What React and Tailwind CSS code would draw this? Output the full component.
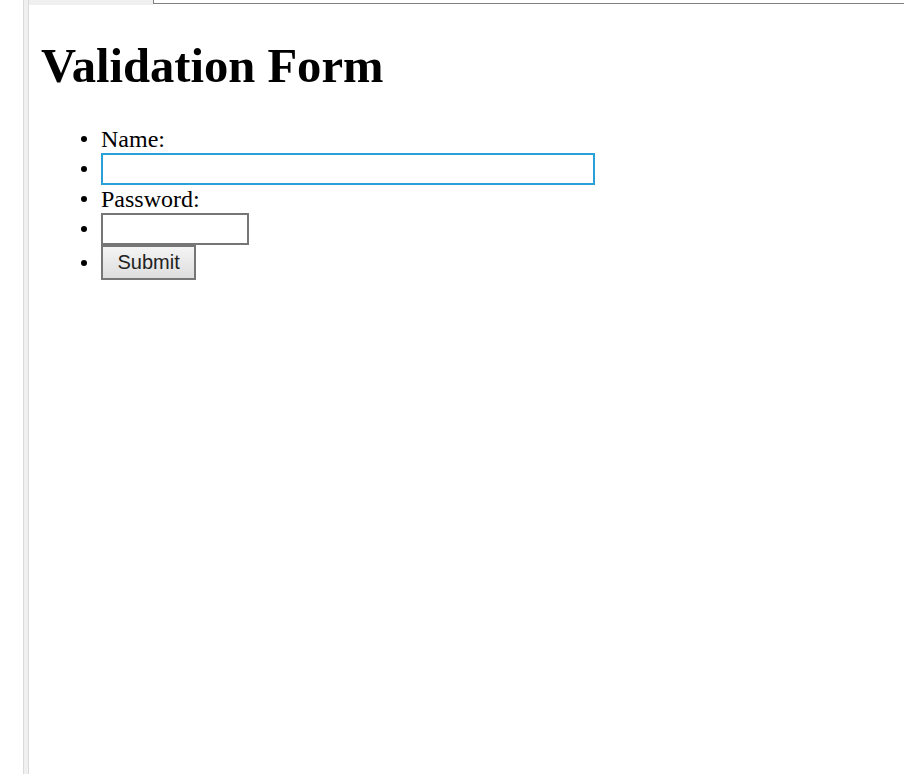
export default function App() {
  const serif = { fontFamily: '"Liberation Serif", "Times New Roman", serif' };
  return (
    <div className="w-[904px] h-[774px] bg-white flex overflow-hidden" style={serif}>
      <div className="w-[23px] shrink-0 bg-white" />
      <div className="w-[6px] shrink-0 bg-[#f0f0f0] border-l border-r border-[#dadada]" />
      <div className="flex-1 flex flex-col">
        <div className="flex h-[5px] shrink-0">
          <div className="w-[124px] h-[5px] bg-[#f0f0f0]" />
          <div className="flex-1 h-[4px] bg-white border-l border-b border-[#808080]" />
        </div>
        <div className="pl-[11px]">
          <h1 className="ml-[1px] text-[48.6px] font-bold leading-[55px] mt-[34px] text-black">Validation Form</h1>
          <ul className="mt-[31px] text-[24px] leading-[28px] text-black">
            <Row>Name:</Row>
            <Row>
              <div className="w-[494px] h-[32px] border-2 border-[#2a9fd8] bg-white" />
            </Row>
            <Row>Password:</Row>
            <Row>
              <div className="w-[148px] h-[32px] border-2 border-[#767676] bg-white" />
            </Row>
            <Row>
              <button
                className="h-[35px] px-[14.5px] border-2 border-[#767676] bg-gradient-to-b from-[#f4f4f4] to-[#dedede] text-[20px] leading-[23px] text-[#222]"
                style={{ fontFamily: '"Liberation Sans", Arial, sans-serif' }}
              >
                Submit
              </button>
            </Row>
          </ul>
        </div>
      </div>
    </div>
  );
}

function Row({ children }) {
  return (
    <li className="flex items-center">
      <div className="w-[61px] shrink-0 flex pl-[41px]">
        <div className="w-[6px] h-[6px] rounded-full bg-black" />
      </div>
      <div className="flex items-center min-h-[28px]">{children}</div>
    </li>
  );
}
